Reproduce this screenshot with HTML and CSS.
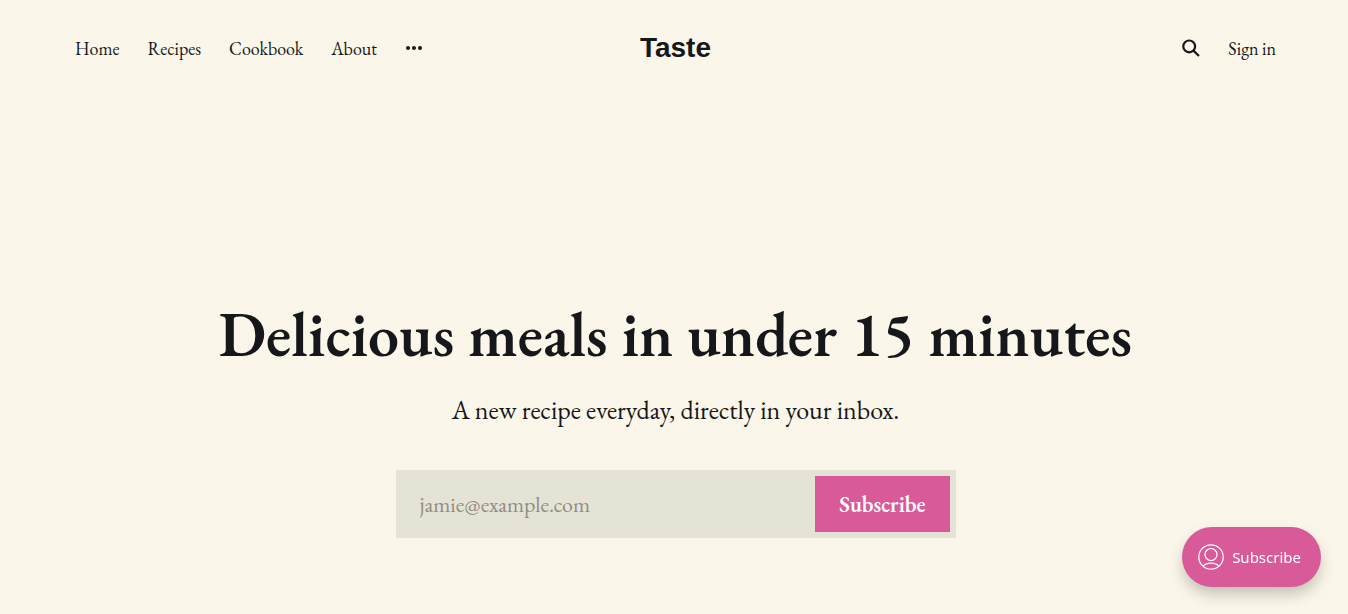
FILE: index.html
```html
<!DOCTYPE html>
<html lang="en">
<head>
    <meta charset="UTF-8">
    <meta name="viewport" content="width=device-width, initial-scale=1.0">
    <title>Taste</title>
    <link rel="stylesheet" href="styles.css">
</head>
<body>
    <div class="site">
        <header class="site-header">
            <nav class="nav">
                <a href="#">Home</a>
                <a href="#">Recipes</a>
                <a href="#">Cookbook</a>
                <a href="#">About</a>
                <button class="icon-btn" type="button" aria-label="More">
                    <svg width="18" height="18" viewBox="0 0 18 18" fill="currentColor">
                        <circle cx="3" cy="9" r="2"/>
                        <circle cx="9" cy="9" r="2"/>
                        <circle cx="15" cy="9" r="2"/>
                    </svg>
                </button>
            </nav>
            <a class="logo" href="#">Taste</a>
            <div class="actions">
                <button class="icon-btn" type="button" aria-label="Search">
                    <svg width="18" height="18" viewBox="0 0 18 18" fill="none" stroke="currentColor" stroke-width="2.2">
                        <circle cx="7.2" cy="7.4" r="5.9"/>
                        <path d="M11.4 11.6L17 17"/>
                    </svg>
                </button>
                <a href="#">Sign in</a>
            </div>
        </header>

        <main class="hero">
            <h1>Delicious meals in under 15 minutes</h1>
            <p>A new recipe everyday, directly in your inbox.</p>
            <form class="signup">
                <input type="email" placeholder="jamie@example.com" aria-label="Email address">
                <button type="submit">Subscribe</button>
            </form>
        </main>
    </div>

    <button class="portal-btn" type="button">
        <svg width="26" height="26" viewBox="0 0 26 26" fill="none" stroke="currentColor" stroke-width="1.2">
            <circle cx="13" cy="13" r="12.2"/>
            <circle cx="13" cy="10.5" r="6"/>
            <path d="M5.2 22.2C7 20.2 9.8 19.2 13 19.2s6 1 7.8 3"/>
        </svg>
        Subscribe
    </button>
</body>
</html>
```

FILE: styles.css
```css
* {
    box-sizing: border-box;
}

body {
    margin: 0;
    background-color: #faf6e9;
    color: #15171a;
    font-family: "EB Garamond", "Liberation Serif", serif;
    font-size: 18px;
}

a {
    color: inherit;
    text-decoration: none;
}

button {
    border: none;
    cursor: pointer;
}

.site {
    padding: 0 72px 0 75px;
}

.site-header {
    display: grid;
    grid-template-columns: 1fr auto 1fr;
    align-items: center;
    height: 96px;
}

.nav,
.actions {
    display: flex;
    align-items: center;
    gap: 28px;
}

.actions {
    justify-content: flex-end;
}

.logo {
    font-family: "Liberation Sans", Arial, sans-serif;
    font-size: 28px;
    font-weight: bold;
}

.icon-btn {
    display: flex;
    padding: 0;
    background: none;
    color: inherit;
}

.hero {
    display: flex;
    flex-direction: column;
    align-items: center;
    padding: 200px 0 76px;
    text-align: center;
}

.hero h1 {
    margin: 0;
    font-size: 62px;
    font-weight: 600;
    line-height: 76px;
}

.hero p {
    margin: 20px 0 42px;
    font-size: 26px;
    line-height: 36px;
}

.signup {
    display: flex;
    width: 100%;
    max-width: 560px;
    height: 68px;
    padding: 6px;
    background-color: #e5e3d6;
}

.signup input {
    flex: 1;
    min-width: 0;
    padding: 0 18px;
    border: none;
    background: none;
    color: inherit;
    font-family: inherit;
    font-size: 22px;
}

.signup input::placeholder {
    color: #8f8e82;
}

.signup button {
    padding: 0 24px;
    background-color: #d95a98;
    color: #fff;
    font-family: inherit;
    font-size: 22px;
    font-weight: 600;
}

.portal-btn {
    position: fixed;
    right: 27px;
    bottom: 27px;
    display: flex;
    align-items: center;
    gap: 8px;
    height: 60px;
    padding: 0 20px 0 16px;
    border-radius: 30px;
    background-color: #d95a98;
    box-shadow: 0 8px 16px -2px rgba(0, 0, 0, 0.25);
    color: #fff;
    font-family: "Noto Sans", sans-serif;
    font-size: 15px;
}
```
